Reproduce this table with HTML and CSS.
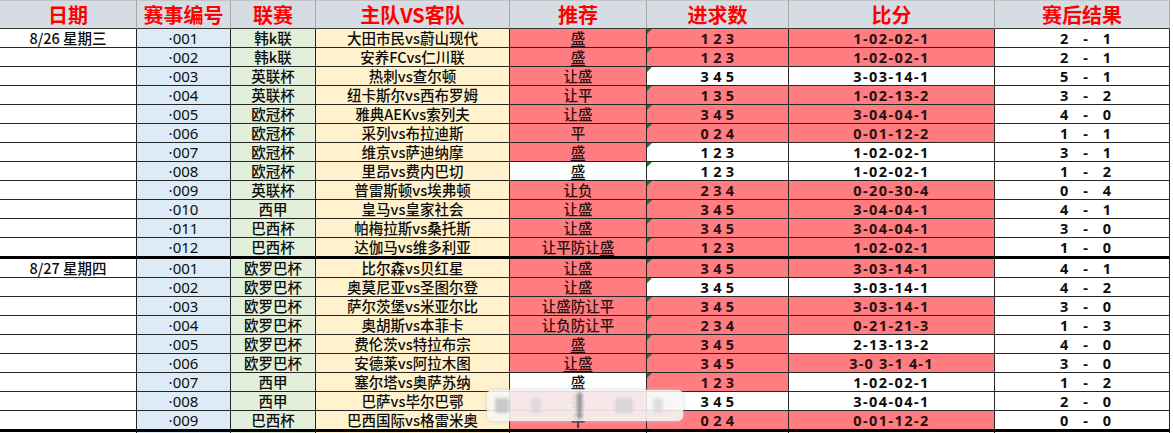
FILE: index.html
```html
<!DOCTYPE html>
<html lang="zh-CN">
<head>
<meta charset="utf-8">
<title>赛事推荐表</title>
<link rel="stylesheet" href="styles.css">
</head>
<body>
<div class="sheet">
  <div class="row head">
    <div class="cell">日期</div><div class="cell">赛事编号</div><div class="cell">联赛</div><div class="cell">主队VS客队</div><div class="cell">推荐</div><div class="cell">进求数</div><div class="cell">比分</div><div class="cell">赛后结果</div>
  </div>

  <div class="row"><div class="cell date">8/26 星期三</div><div class="cell no">·001</div><div class="cell lg">韩k联</div><div class="cell tm">大田市民vs蔚山现代</div><div class="cell tj pk"><u>盛</u></div><div class="cell gs pk q">1 2 3</div><div class="cell bf pk">1-02-02-1</div><div class="cell rs"><span>2</span><span>-</span><span>1</span></div></div>
  <div class="row"><div class="cell date"></div><div class="cell no">·002</div><div class="cell lg">韩k联</div><div class="cell tm">安养FCvs仁川联</div><div class="cell tj pk"><u>盛</u></div><div class="cell gs pk q">1 2 3</div><div class="cell bf pk">1-02-02-1</div><div class="cell rs"><span>2</span><span>-</span><span>1</span></div></div>
  <div class="row"><div class="cell date"></div><div class="cell no">·003</div><div class="cell lg">英联杯</div><div class="cell tm">热刺vs查尔顿</div><div class="cell tj pk">让盛</div><div class="cell gs q">3 4 5</div><div class="cell bf">3-03-14-1</div><div class="cell rs"><span>5</span><span>-</span><span>1</span></div></div>
  <div class="row"><div class="cell date"></div><div class="cell no">·004</div><div class="cell lg">英联杯</div><div class="cell tm">纽卡斯尔vs西布罗姆</div><div class="cell tj pk">让平</div><div class="cell gs pk q">1 3 5</div><div class="cell bf pk">1-02-13-2</div><div class="cell rs"><span>3</span><span>-</span><span>2</span></div></div>
  <div class="row"><div class="cell date"></div><div class="cell no">·005</div><div class="cell lg">欧冠杯</div><div class="cell tm">雅典AEKvs索列夫</div><div class="cell tj pk">让盛</div><div class="cell gs pk q">3 4 5</div><div class="cell bf pk">3-04-04-1</div><div class="cell rs"><span>4</span><span>-</span><span>0</span></div></div>
  <div class="row"><div class="cell date"></div><div class="cell no">·006</div><div class="cell lg">欧冠杯</div><div class="cell tm">采列vs布拉迪斯</div><div class="cell tj pk">平</div><div class="cell gs pk q">0 2 4</div><div class="cell bf pk">0-01-12-2</div><div class="cell rs"><span>1</span><span>-</span><span>1</span></div></div>
  <div class="row"><div class="cell date"></div><div class="cell no">·007</div><div class="cell lg">欧冠杯</div><div class="cell tm">维京vs萨迪纳摩</div><div class="cell tj pk"><u>盛</u></div><div class="cell gs q">1 2 3</div><div class="cell bf">1-02-02-1</div><div class="cell rs"><span>3</span><span>-</span><span>1</span></div></div>
  <div class="row"><div class="cell date"></div><div class="cell no">·008</div><div class="cell lg">欧冠杯</div><div class="cell tm">里昂vs费内巴切</div><div class="cell tj"><u>盛</u></div><div class="cell gs q">1 2 3</div><div class="cell bf">1-02-02-1</div><div class="cell rs"><span>1</span><span>-</span><span>2</span></div></div>
  <div class="row"><div class="cell date"></div><div class="cell no">·009</div><div class="cell lg">英联杯</div><div class="cell tm">普雷斯顿vs埃弗顿</div><div class="cell tj pk">让负</div><div class="cell gs pk q">2 3 4</div><div class="cell bf pk">0-20-30-4</div><div class="cell rs"><span>0</span><span>-</span><span>4</span></div></div>
  <div class="row"><div class="cell date"></div><div class="cell no">·010</div><div class="cell lg">西甲</div><div class="cell tm">皇马vs皇家社会</div><div class="cell tj pk">让盛</div><div class="cell gs pk q">3 4 5</div><div class="cell bf pk">3-04-04-1</div><div class="cell rs"><span>4</span><span>-</span><span>1</span></div></div>
  <div class="row"><div class="cell date"></div><div class="cell no">·011</div><div class="cell lg">巴西杯</div><div class="cell tm">帕梅拉斯vs桑托斯</div><div class="cell tj pk">让盛</div><div class="cell gs pk q">3 4 5</div><div class="cell bf pk">3-04-04-1</div><div class="cell rs"><span>3</span><span>-</span><span>0</span></div></div>
  <div class="row gend"><div class="cell date"></div><div class="cell no">·012</div><div class="cell lg">巴西杯</div><div class="cell tm">达伽马vs维多利亚</div><div class="cell tj pk">让平防让<u>盛</u></div><div class="cell gs pk q">1 2 3</div><div class="cell bf pk">1-02-02-1</div><div class="cell rs"><span>1</span><span>-</span><span>0</span></div></div>

  <div class="row"><div class="cell date">8/27 星期四</div><div class="cell no">·001</div><div class="cell lg">欧罗巴杯</div><div class="cell tm">比尔森vs贝红星</div><div class="cell tj pk">让盛</div><div class="cell gs pk q">3 4 5</div><div class="cell bf pk">3-03-14-1</div><div class="cell rs"><span>4</span><span>-</span><span>1</span></div></div>
  <div class="row"><div class="cell date"></div><div class="cell no">·002</div><div class="cell lg">欧罗巴杯</div><div class="cell tm">奥莫尼亚vs圣图尔登</div><div class="cell tj pk">让盛</div><div class="cell gs q">3 4 5</div><div class="cell bf">3-03-14-1</div><div class="cell rs"><span>4</span><span>-</span><span>2</span></div></div>
  <div class="row"><div class="cell date"></div><div class="cell no">·003</div><div class="cell lg">欧罗巴杯</div><div class="cell tm">萨尔茨堡vs米亚尔比</div><div class="cell tj pk">让盛防让平</div><div class="cell gs pk q">3 4 5</div><div class="cell bf pk">3-03-14-1</div><div class="cell rs"><span>3</span><span>-</span><span>0</span></div></div>
  <div class="row"><div class="cell date"></div><div class="cell no">·004</div><div class="cell lg">欧罗巴杯</div><div class="cell tm">奥胡斯vs本菲卡</div><div class="cell tj pk">让负防让平</div><div class="cell gs pk q">2 3 4</div><div class="cell bf pk">0-21-21-3</div><div class="cell rs"><span>1</span><span>-</span><span>3</span></div></div>
  <div class="row"><div class="cell date"></div><div class="cell no">·005</div><div class="cell lg">欧罗巴杯</div><div class="cell tm">费伦茨vs特拉布宗</div><div class="cell tj pk"><u>盛</u></div><div class="cell gs pk q">3 4 5</div><div class="cell bf">2-13-13-2</div><div class="cell rs"><span>4</span><span>-</span><span>0</span></div></div>
  <div class="row"><div class="cell date"></div><div class="cell no">·006</div><div class="cell lg">欧罗巴杯</div><div class="cell tm">安德莱vs阿拉木图</div><div class="cell tj pk"><u>让盛</u></div><div class="cell gs pk q">3 4 5</div><div class="cell bf pk wide">3-0 3-1 4-1</div><div class="cell rs"><span>3</span><span>-</span><span>0</span></div></div>
  <div class="row"><div class="cell date"></div><div class="cell no">·007</div><div class="cell lg">西甲</div><div class="cell tm">塞尔塔vs奥萨苏纳</div><div class="cell tj">盛</div><div class="cell gs pk q">1 2 3</div><div class="cell bf">1-02-02-1</div><div class="cell rs"><span>1</span><span>-</span><span>2</span></div></div>
  <div class="row"><div class="cell date"></div><div class="cell no">·008</div><div class="cell lg">西甲</div><div class="cell tm">巴萨vs毕尔巴鄂</div><div class="cell tj pk">盛</div><div class="cell gs">3 4 5</div><div class="cell bf">3-04-04-1</div><div class="cell rs"><span>2</span><span>-</span><span>0</span></div></div>
  <div class="row gend"><div class="cell date"></div><div class="cell no">·009</div><div class="cell lg">巴西杯</div><div class="cell tm">巴西国际vs格雷米奥</div><div class="cell tj pk">平</div><div class="cell gs pk">0 2 4</div><div class="cell bf pk">0-01-12-2</div><div class="cell rs"><span>0</span><span>-</span><span>0</span></div></div>
  <div class="row"><div class="cell date"></div><div class="cell no"></div><div class="cell lg"></div><div class="cell tm"></div><div class="cell tj"></div><div class="cell gs"></div><div class="cell bf"></div><div class="cell rs"></div></div>

  <div class="veil" aria-hidden="true">
    <span class="blot b1"></span><span class="blot b2"></span><span class="blot b3"></span><span class="blot b4"></span><span class="blot b5"></span>
  </div>
</div>
</body>
</html>
```

FILE: styles.css
```css
html, body {
  margin: 0;
  padding: 0;
  background: #ffffff;
}

body {
  font-family: "Noto Sans CJK SC", "Microsoft YaHei", "Noto Sans", sans-serif;
  color: #0d0d0d;
}

.sheet {
  position: relative;
  width: 1173px;
  height: 433px;
  overflow: hidden;
}

.row {
  display: grid;
  grid-template-columns: 137px 94px 85px 194px 137px 142px 206px 175px;
  height: 19px;
}

.cell {
  position: relative;
  box-sizing: border-box;
  display: flex;
  align-items: center;
  justify-content: center;
  border-right: 1px solid #262626;
  border-bottom: 1px solid #262626;
  font-size: 14.5px;
  font-weight: 500;
  line-height: 1;
  white-space: nowrap;
  background: #ffffff;
}

.head {
  height: 29px;
}

.head .cell {
  background: #d6dce4;
  color: #ff0000;
  font-size: 20px;
  font-weight: 700;
  line-height: 1;
  border-top: 1px solid #c4c4c4;
  border-right: 1px solid #a8a8a8;
  border-bottom: 1px solid #3a3a3a;
}

.gend {
  height: 21px;
}

.gend .cell {
  border-bottom: 3px solid #000000;
}

.no {
  background: #ddebf7;
  font-family: "Noto Sans", "Liberation Sans", sans-serif;
  font-weight: 400;
  font-size: 15px;
}

.lg { background: #e2efda; }
.tm { background: #fff2cc; }

.pk {
  background: #ff7c80;
  color: #2a1010;
}

.gs, .bf, .rs {
  font-family: "Noto Sans", "Noto Sans CJK SC", sans-serif;
  font-weight: 700;
  font-size: 14.5px;
}

.gs {
  letter-spacing: 0.3px;
}

.bf {
  letter-spacing: 1.4px;
}

.bf.wide {
  letter-spacing: 1.2px;
}

.rs {
  gap: 15px;
  padding-left: 7px;
}

.tj u {
  text-decoration: underline;
  text-decoration-thickness: 1px;
  text-underline-offset: 2px;
}

.q::before {
  content: "";
  position: absolute;
  left: 0;
  top: 0;
  width: 0;
  height: 0;
  border-top: 5px solid #1f7a1f;
  border-right: 5px solid transparent;
}

.veil {
  position: absolute;
  left: 487px;
  top: 390px;
  width: 196px;
  height: 31px;
  border-radius: 5px;
  background: rgba(246, 246, 246, 0.88);
  box-shadow: 0 0 4px rgba(200, 200, 200, 0.8);
}

.blot {
  position: absolute;
  top: 8px;
  height: 15px;
  background: rgba(190, 190, 190, 0.8);
  border-radius: 3px;
  filter: blur(1.5px);
}

.b1 { left: 8px; width: 14px; }
.b2 { left: 44px; width: 10px; background: rgba(215, 215, 215, 0.8); }
.b3 { left: 90px; top: 2px; height: 27px; width: 5px; background: rgba(120, 120, 120, 0.7); }
.b4 { left: 128px; width: 18px; background: rgba(210, 210, 210, 0.8); }
.b5 { left: 166px; width: 10px; background: rgba(215, 215, 215, 0.8); }
```
